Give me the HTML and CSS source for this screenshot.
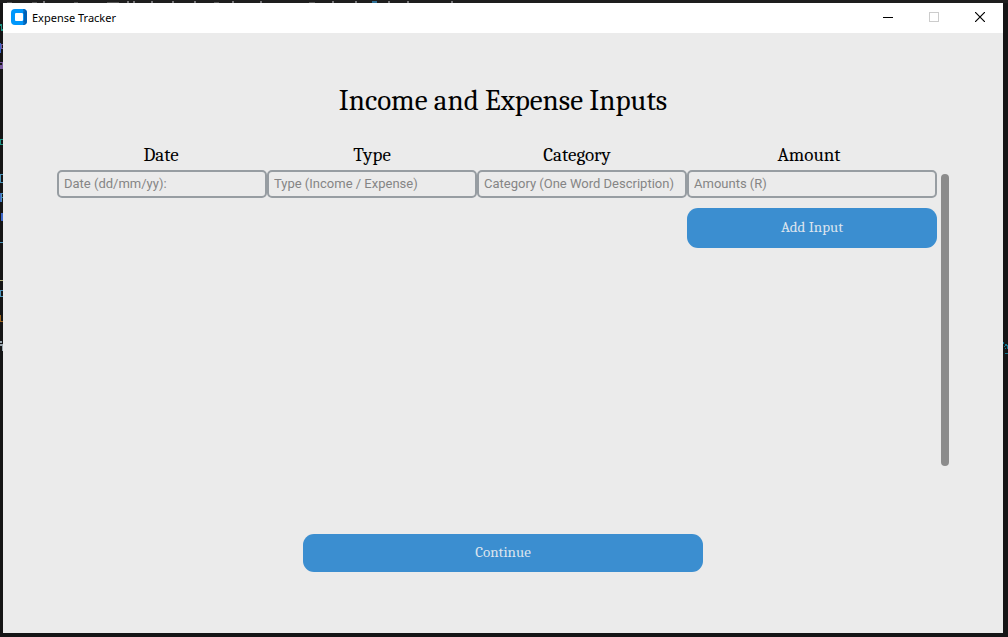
FILE: index.html
```html
<!DOCTYPE html>
<html lang="en">
<head>
<meta charset="utf-8">
<title>Expense Tracker</title>
<link rel="stylesheet" href="styles.css">
</head>
<body>
<div class="editor" aria-hidden="true">
  <svg class="editor-top" width="470" height="3" shape-rendering="crispEdges">
    <g fill="#77777a"><path d="M7 2h5M32 2h5M74 2h4M107 2h12M214 2h5M309 2h6" stroke="#555" stroke-width="1"/><path d="M43 1h2v2h-2zM127 1h2v2h-2zM133 1h2v2h-2zM151 1h2v2h-2zM172 1h2v2h-2zM194 1h2v2h-2zM232 1h2v2h-2zM260 1h2v2h-2zM332 1h2v2h-2zM355 1h2v2h-2zM388 1h2v2h-2zM407 1h2v2h-2zM451 1h2v2h-2z"/></g>
    <path d="M372 1h5v2h-5z" fill="#2d6f96"/>
  </svg>
  <svg class="editor-left" width="3" height="360" shape-rendering="crispEdges">
    <path d="M0 24h2v5h1v2H1v-5H0zM0 139h3v1H1v4h2v1H0z" fill="#1f9484"/>
    <path d="M0 43h1v10H0zM0 193h1v9H0zM1 213h2v8H1z" fill="#3c66c8"/>
    <path d="M1 44h2v1H2v3h1v1H1zM0 62h3v7H0v-4h2v-2H0z" fill="#76599c"/>
    <path d="M0 174h3v1H1v7h2v1H0zM1 193h2v1H2v3h1v1H2v4H1zM0 242h3v1H0zM0 290h3v1H1v5h2v1H0z" fill="#4c93b8"/>
    <path d="M0 280h3v1H0z" fill="#b0ad79"/>
    <path d="M0 315h1v6h2v1H0z" fill="#9b641f"/>
    <path d="M0 341h2v2H0zM0 344h3v7H2v-5H0z" fill="#9aa6ae"/>
  </svg>
  <svg class="editor-right" width="5" height="16" shape-rendering="crispEdges">
    <path d="M0 2h1v4h1v2h1v1H2V7H1V4H0zM2 4h2v1h1v4H4V6H2zM2 13h3v1H2z" fill="#12758f"/>
  </svg>
</div>

<main class="window">
  <header class="titlebar">
    <svg class="app-icon" width="16" height="16" viewBox="0 0 16 16">
      <rect width="16" height="16" rx="4" fill="#0097fb"/>
      <path d="M12 0a4 4 0 0 1 4 4v8a4 4 0 0 1-4 4V12L13 11V5L12 4z" fill="#0060b4"/>
      <path d="M12 0L14 2L12 4zM12 16L14 14L12 12z" fill="#0879cf"/>
      <rect x="4" y="4" width="8" height="8" rx="1" fill="#fff"/>
    </svg>
    <span class="app-name">Expense Tracker</span>
    <div class="controls">
      <button class="control" type="button" aria-label="Minimize"><svg width="10" height="10" shape-rendering="crispEdges"><path d="M0 5.500h10" stroke="#000"/></svg></button>
      <button class="control" type="button" aria-label="Maximize" disabled><svg width="10" height="10"><rect x=".5" y=".5" width="9" height="9" fill="none" stroke="#ccc"/></svg></button>
      <button class="control" type="button" aria-label="Close"><svg width="10" height="10"><path d="M0 0L10 10M10 0L0 10" stroke="#000" stroke-width="1.200"/></svg></button>
    </div>
  </header>

  <form class="content">
    <h1 class="heading">Income and Expense Inputs</h1>
    <div class="labels">
      <label for="date">Date</label>
      <label for="type">Type</label>
      <label for="category">Category</label>
      <label for="amount">Amount</label>
    </div>
    <div class="scroll-area">
      <div class="entries">
        <input class="entry" id="date" type="text" placeholder="Date (dd/mm/yy):">
        <input class="entry" id="type" type="text" placeholder="Type (Income / Expense)">
        <input class="entry" id="category" type="text" placeholder="Category (One Word Description)">
        <input class="entry" id="amount" type="text" placeholder="Amounts (R)">
        <button class="button add" type="button">Add Input</button>
      </div>
      <div class="scroll-thumb"></div>
    </div>
    <button class="button continue" type="button">Continue</button>
  </form>
</main>
</body>
</html>
```
FILE: styles.css
```css
* {
  box-sizing: border-box;
}

body {
  margin: 0;
  min-height: 100vh;
  display: flex;
  padding: 3px 5px 4px 3px;
  background: #151516;
  font-family: Cambria, "Liberation Serif", serif;
}

.editor-top,
.editor-left,
.editor-right {
  position: absolute;
  top: 0;
  left: 0;
}

.editor-top {
  width: 100%;
  background: #1e1e1e;
}

.editor-right {
  top: 340px;
  left: auto;
  right: 0;
}

.window {
  flex: 1;
  display: flex;
  flex-direction: column;
  background: #ebebeb;
}

.titlebar {
  display: flex;
  align-items: center;
  height: 30px;
  padding-left: 8px;
  background: #fff;
}

.app-name {
  margin-left: 5px;
  font: 11px/16px "Segoe UI", "Noto Sans", sans-serif;
  color: #000;
}

.app-icon {
  margin-bottom: 2px;
}

.controls {
  display: flex;
  height: 100%;
  margin-left: auto;
}

.control {
  display: flex;
  align-items: center;
  justify-content: center;
  width: 46px;
  padding: 0 0 2px;
  border: 0;
  background: none;
}

.content {
  flex: 1;
  display: flex;
  flex-direction: column;
  padding: 48px 54px 61px;
}

.heading {
  margin: 0;
  text-align: center;
  font-size: 29px;
  font-weight: 400;
  line-height: 40px;
}

.labels {
  display: grid;
  grid-template-columns: 208fr 214fr 196fr 268fr 6fr;
  margin-top: 22px;
  text-align: center;
  font-size: 19px;
  line-height: 24px;
}

.scroll-area {
  display: flex;
  gap: 4px;
  flex: 1;
  margin-top: 3px;
}

.entries {
  flex: 1;
  display: grid;
  grid-template-columns: 21fr 21fr 21fr 25fr;
  grid-template-rows: 28px 40px;
  row-gap: 10px;
  align-content: start;
}

.entry {
  min-width: 0;
  height: 28px;
  padding: 0 5px 1px;
  border: 2px solid #979da2;
  border-radius: 5px;
  background: transparent;
  font: 13px Roboto, sans-serif;
}

.entry::placeholder {
  color: #858585;
  opacity: 1;
}

.button {
  padding: 0 6px 2px;
  border: 0;
  border-radius: 11px;
  background: #3b8ed0;
  color: #dce4ee;
  font-family: inherit;
  font-size: 15px;
}

.add {
  grid-column: 4;
}

.scroll-thumb {
  width: 8px;
  margin-top: 4px;
  border-radius: 4px;
  background: #8c8c8c;
}

.continue {
  align-self: center;
  width: 400px;
  max-width: 100%;
  height: 38px;
  margin-top: 68px;
}
```
